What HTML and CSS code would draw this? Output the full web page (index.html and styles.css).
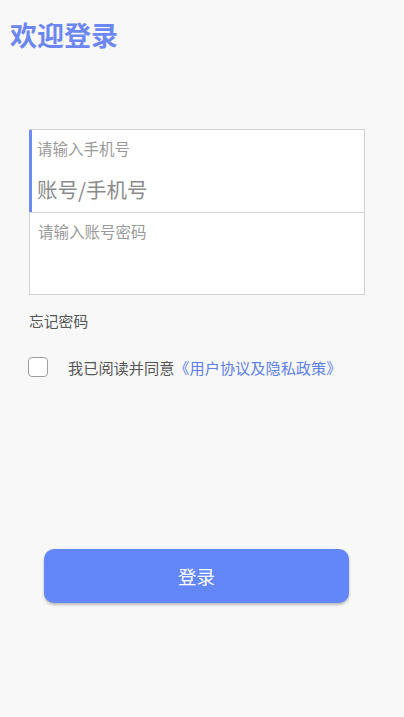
FILE: index.html
```html
<!DOCTYPE html>
<html lang="zh-CN">
<head>
<meta charset="utf-8">
<title>欢迎登录</title>
<link rel="stylesheet" href="styles.css">
</head>
<body>
<div class="page">
  <h1 class="title">欢迎登录</h1>
  <div class="form">
    <div class="field field-active">
      <div class="label">请输入手机号</div>
      <div class="value">账号/手机号</div>
    </div>
    <div class="field">
      <div class="label">请输入账号密码</div>
    </div>
  </div>
  <div class="forgot">忘记密码</div>
  <div class="agree">
    <span class="check"></span>
    <span class="agree-text">我已阅读并同意<span class="link">《用户协议及隐私政策》</span></span>
  </div>
  <div class="btn-wrap">
    <div class="btn">登录</div>
  </div>
</div>
</body>
</html>
```

FILE: styles.css
```css
html, body {
  margin: 0;
  padding: 0;
  background: #f8f8f8;
}
body {
  font-family: "Noto Sans CJK SC", "Noto Sans", sans-serif;
  width: 404px;
  height: 717px;
  overflow: hidden;
}
.page {
  display: flex;
  flex-direction: column;
}
.title {
  margin: 0;
  padding: 16px 0 0 10px;
  font-size: 27px;
  line-height: 38px;
  font-weight: 700;
  color: #6c87f3;
}
.form {
  margin: 75px 0 0 29px;
  width: 334px;
  background: #ffffff;
  border: 1px solid #d2d2d2;
  display: flex;
  flex-direction: column;
}
.field {
  height: 82px;
  padding: 7px 0 0 8px;
  box-sizing: border-box;
}
.field + .field {
  border-top: 1px solid #d2d2d2;
  height: 82px;
}
.field-active {
  border-left: 3px solid #6e8af5;
  padding-left: 5px;
  margin-left: -1px;
}
.label {
  font-size: 15.5px;
  line-height: 22px;
  color: #9a9a9a;
}
.value {
  margin-top: 16px;
  font-size: 20.5px;
  line-height: 28px;
  color: #8a8a8a;
}
.forgot {
  margin: 15px 0 0 29px;
  font-size: 14.8px;
  line-height: 22px;
  color: #555555;
}
.agree {
  margin: 24px 0 0 28px;
  display: flex;
  align-items: center;
  gap: 20px;
}
.check {
  width: 18px;
  height: 18px;
  border: 1px solid #9e9e9e;
  border-radius: 4px;
  background: #ffffff;
}
.agree-text {
  font-size: 15.2px;
  line-height: 22px;
  color: #555555;
}
.link {
  color: #5d7fe6;
}
.btn-wrap {
  margin: 171px 0 0 44px;
}
.btn {
  width: 305px;
  height: 54px;
  border-radius: 10px;
  background: #6386f8;
  color: #ffffff;
  font-size: 18.5px;
  display: flex;
  align-items: center;
  justify-content: center;
  box-shadow: 0 2px 3px rgba(0, 0, 0, 0.25);
}
```
